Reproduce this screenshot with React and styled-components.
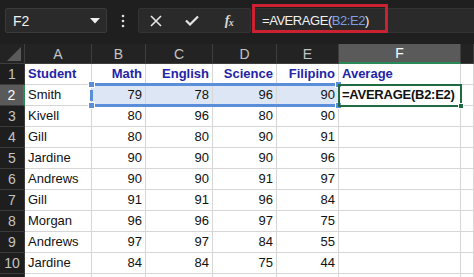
import React from "react";
import styled, { createGlobalStyle } from "styled-components";

const GlobalStyle = createGlobalStyle`
  html, body { margin: 0; padding: 0; background: #1f1f1f; overflow: hidden; }
  * { box-sizing: border-box; }
`;

const Frame = styled.div`
  width: 474px;
  height: 277px;
  overflow: hidden;
  background: #1f1f1f;
  font-family: "Liberation Sans", Arial, sans-serif;
`;

const Toolbar = styled.div`
  height: 44px;
  display: flex;
  align-items: flex-start;
  padding: 8px 0 0 5px;
`;

const NameBox = styled.div`
  width: 102px;
  height: 25px;
  background: #2a2a2a;
  border: 1px solid #3a3a3a;
  border-radius: 2px;
  display: flex;
  align-items: center;
  justify-content: space-between;
  padding: 0 6px 0 7px;
  color: #f0f0f0;
  font-size: 14px;
`;

const DotsSlot = styled.div`
  width: 31px;
  height: 25px;
  display: flex;
  align-items: center;
  justify-content: center;
`;

const FxGroup = styled.div`
  width: 113px;
  height: 25px;
  background: #2a2a2a;
  border: 1px solid #333;
  border-radius: 2px;
  display: flex;
  align-items: center;
`;

const FxButton = styled.div`
  width: ${(p) => p.$w}px;
  height: 23px;
  display: flex;
  align-items: center;
  justify-content: center;
  color: #e8e8e8;
`;

const FxText = styled.span`
  font-family: "Liberation Serif", "Times New Roman", serif;
  font-style: italic;
  font-weight: bold;
  font-size: 14px;
  color: #d8d8d8;
  letter-spacing: -0.5px;
  sub { font-size: 10px; vertical-align: -1px; }
`;

const FormulaInput = styled.div`
  position: relative;
  flex: 1;
  margin-left: 2px;
  height: 25px;
  background: #2a2a2a;
  border: 1px solid #333;
  border-right: none;
  display: flex;
  align-items: center;
  padding-left: 8px;
  color: #f2f2f2;
  font-size: 13px;
  letter-spacing: -0.45px;
`;

const RefText = styled.span`
  color: #7b9fe0;
`;

const Annotation = styled.div`
  position: absolute;
  left: -2px;
  top: -5px;
  width: 136px;
  height: 29px;
  border: 3px solid #cc2130;
  pointer-events: none;
`;

const Sheet = styled.div`
  position: relative;
  display: grid;
  grid-template-columns: 25px 67px 54px 67px 64px 62px 122px 13px;
  grid-template-rows: 20px;
  grid-auto-rows: 21px;
`;

const ColHead = styled.div`
  background: ${(p) => (p.$sel ? "#5a5a5a" : "#232323")};
  color: ${(p) => (p.$sel ? "#ffffff" : "#c4c4c4")};
  border-right: 1px solid #3e3e3e;
  border-bottom: ${(p) => (p.$sel ? "2px solid #2a8a57" : "1px solid #3e3e3e")};
  font-size: 14px;
  display: flex;
  align-items: center;
  justify-content: center;
`;

const Corner = styled.div`
  background: #232323;
  border-right: 1px solid #3e3e3e;
  border-bottom: 1px solid #3e3e3e;
  display: flex;
  align-items: flex-end;
  justify-content: flex-end;
  padding: 0 3px 2px 0;
`;

const RowHead = styled.div`
  background: ${(p) => (p.$sel ? "#5a5a5a" : "#1e1e1e")};
  color: ${(p) => (p.$sel ? "#ffffff" : "#c4c4c4")};
  border-bottom: 1px solid #3a3a3a;
  border-right: ${(p) => (p.$sel ? "2px solid #2a8a57" : "1px solid #3a3a3a")};
  font-size: 14px;
  display: flex;
  align-items: center;
  justify-content: center;
`;

const Cell = styled.div`
  background: ${(p) => (p.$range ? "#dce6f4" : "#ffffff")};
  border-right: 1px solid #d6d6d6;
  border-bottom: 1px solid #d6d6d6;
  font-size: 13px;
  line-height: 20px;
  padding: 0 3px;
  color: ${(p) => (p.$head ? "#2424a6" : "#111")};
  font-weight: ${(p) => (p.$head || p.$bold ? "bold" : "normal")};
  text-align: ${(p) => (p.$num ? "right" : "left")};
  white-space: nowrap;
  overflow: visible;
  letter-spacing: ${(p) => (p.$bold ? "-0.25px" : "0")};
`;

const RangeBox = styled.div`
  position: absolute;
  left: 90px;
  top: 39px;
  width: 250px;
  height: 24px;
  border-top: 3px solid #5b8ed8;
  border-bottom: 3px solid #5b8ed8;
  pointer-events: none;
`;

const RangeLeft = styled.div`
  position: absolute;
  left: 90px;
  top: 46px;
  width: 3px;
  height: 11px;
  background: #5b8ed8;
`;

const Handle = styled.div`
  position: absolute;
  left: ${(p) => p.$x}px;
  top: ${(p) => p.$y}px;
  width: 7px;
  height: 7px;
  background: #5b8ed8;
  border: 1px solid #ffffff;
`;

const ActiveCell = styled.div`
  position: absolute;
  left: 338px;
  top: 40px;
  width: 124px;
  height: 23px;
  border: 2px solid #1e6b43;
  pointer-events: none;
`;

const FillHandle = styled.div`
  position: absolute;
  left: 458px;
  top: 59px;
  width: 6px;
  height: 6px;
  background: #1e6b43;
  border: 1px solid #ffffff;
`;

const cols = ["A", "B", "C", "D", "E", "F", ""];

const header = ["Student", "Math", "English", "Science", "Filipino", "Average", ""];

const data = [
  ["Smith", 79, 78, 96, 90],
  ["Kivell", 80, 96, 80, 90],
  ["Gill", 80, 80, 90, 91],
  ["Jardine", 90, 90, 90, 96],
  ["Andrews", 90, 90, 91, 97],
  ["Gill", 91, 91, 96, 84],
  ["Morgan", 96, 96, 97, 75],
  ["Andrews", 97, 97, 84, 55],
  ["Jardine", 84, 84, 75, 44],
  ["", "", "", "", ""],
];

export default function App() {
  return (
    <Frame>
      <GlobalStyle />
      <Toolbar>
        <NameBox>
          <span>F2</span>
          <svg width="10" height="6" viewBox="0 0 10 6">
            <polygon points="0,0 10,0 5,5.5" fill="#f0f0f0" />
          </svg>
        </NameBox>
        <DotsSlot>
          <svg width="4" height="14" viewBox="0 0 4 14">
            <circle cx="2" cy="2" r="1.3" fill="#e0e0e0" />
            <circle cx="2" cy="7" r="1.3" fill="#e0e0e0" />
            <circle cx="2" cy="12" r="1.3" fill="#e0e0e0" />
          </svg>
        </DotsSlot>
        <FxGroup>
          <FxButton $w={34}>
            <svg width="12" height="12" viewBox="0 0 12 12">
              <path d="M1 1 L11 11 M11 1 L1 11" stroke="#e6e6e6" strokeWidth="1.6" fill="none" />
            </svg>
          </FxButton>
          <FxButton $w={38}>
            <svg width="14" height="11" viewBox="0 0 14 11">
              <path d="M1 5.5 L5 9.5 L13 1.5" stroke="#e6e6e6" strokeWidth="2.2" fill="none" />
            </svg>
          </FxButton>
          <FxButton $w={36}>
            <FxText>
              f<sub>x</sub>
            </FxText>
          </FxButton>
        </FxGroup>
        <FormulaInput>
          <span>
            =AVERAGE(<RefText>B2:E2</RefText>)
          </span>
          <Annotation />
        </FormulaInput>
      </Toolbar>
      <Sheet>
        <Corner>
          <svg width="14" height="14" viewBox="0 0 14 14">
            <polygon points="14,0 14,14 0,14" fill="#5a5a5a" />
          </svg>
        </Corner>
        {cols.map((c, i) => (
          <ColHead key={i} $sel={c === "F"}>
            {c}
          </ColHead>
        ))}
        <RowHead>1</RowHead>
        {header.map((h, i) => (
          <Cell key={i} $head $num={i >= 1 && i <= 4}>
            {h}
          </Cell>
        ))}
        {data.map((row, r) => (
          <React.Fragment key={r}>
            <RowHead $sel={r === 0}>{r < 9 ? r + 2 : ""}</RowHead>
            {row.map((v, i) => (
              <Cell key={i} $num={i > 0} $range={r === 0 && i > 0}>
                {v}
              </Cell>
            ))}
            <Cell $bold={r === 0}>{r === 0 ? "=AVERAGE(B2:E2)" : ""}</Cell>
            <Cell />
          </React.Fragment>
        ))}
        <RangeBox />
        <RangeLeft />
        <Handle $x={88} $y={37} />
        <Handle $x={88} $y={58} />
        <Handle $x={335} $y={37} />
        <Handle $x={335} $y={58} />
        <ActiveCell />
        <FillHandle />
      </Sheet>
    </Frame>
  );
}
